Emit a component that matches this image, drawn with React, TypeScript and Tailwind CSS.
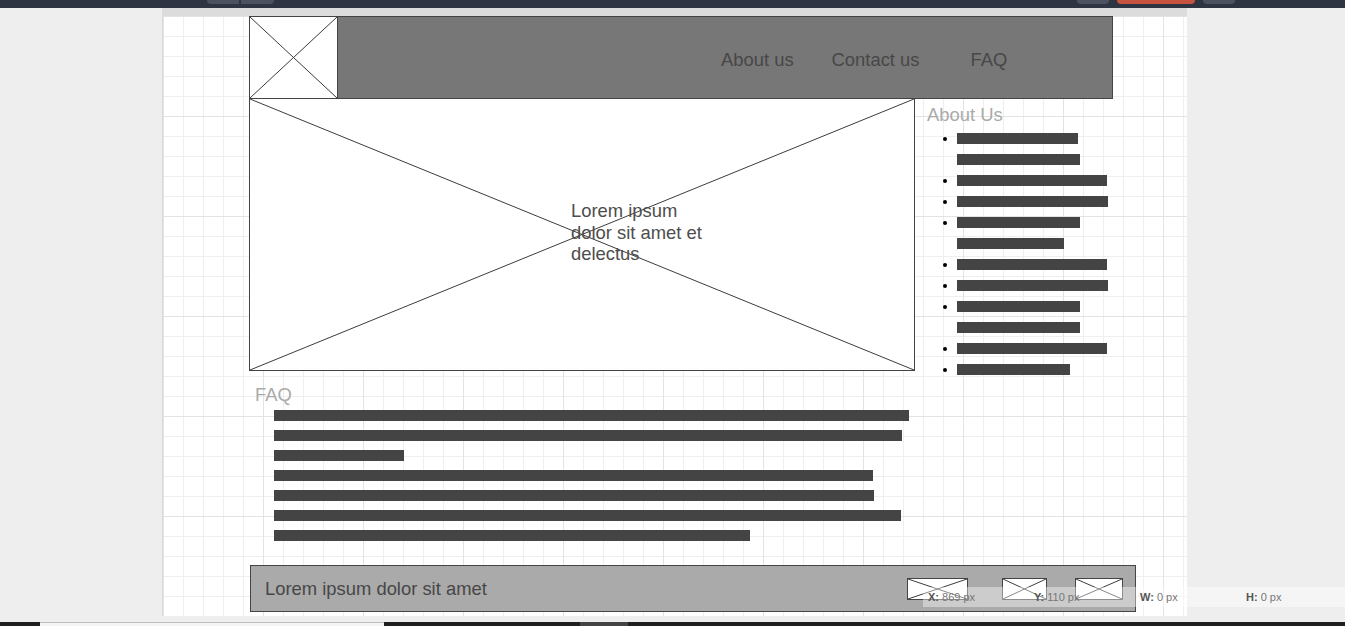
import React from 'react';

const aboutRows: number[][] = [[121, 123], [150], [151], [123, 107], [150], [151], [123, 123], [150], [113]];
const faqBars = [635, 628, 130, 599, 600, 627, 476];

function CrossLines() {
  return (
    <svg className="absolute inset-0 w-full h-full" preserveAspectRatio="none" viewBox="0 0 100 100">
      <line x1="0" y1="0" x2="100" y2="100" stroke="#3c3c3c" strokeWidth="1" vectorEffect="non-scaling-stroke" />
      <line x1="100" y1="0" x2="0" y2="100" stroke="#3c3c3c" strokeWidth="1" vectorEffect="non-scaling-stroke" />
    </svg>
  );
}

function Cross({ className = '' }: { className?: string }) {
  return (
    <div className={`relative bg-white ${className}`}>
      <CrossLines />
    </div>
  );
}

export default function App() {
  return (
    <div className="relative h-[626px] w-[1345px] overflow-hidden bg-[#eeeeee] font-['Liberation_Sans',Arial,sans-serif] flex flex-col">
      {/* Toolbar */}
      <div className="h-[8px] shrink-0 bg-[#2e3441] flex items-start">
        <div className="ml-[207px] flex gap-[2px]">
          <div className="w-[32px] h-[4px] bg-[#4b515e] rounded-bl-[4px]" />
          <div className="w-[33px] h-[4px] bg-[#4b515e] rounded-br-[4px]" />
        </div>
        <div className="ml-[803px] w-[32px] h-[4px] bg-[#4b515e] rounded-b-[4px]" />
        <div className="ml-[8px] w-[78px] h-[4px] bg-[#c5533f] rounded-b-[4px]" />
        <div className="ml-[8px] w-[32px] h-[4px] bg-[#4b515e] rounded-b-[4px]" />
      </div>

      {/* Canvas */}
      <div className="ml-[162px] w-[1025px] shrink-0 flex flex-col">
        <div className="h-[8px] bg-[#dcdcdc]" />
        <div className="h-[600px] border-l border-[#dadada] bg-white overflow-hidden [background-image:linear-gradient(to_right,#e3e3e3_1px,transparent_1px),linear-gradient(to_bottom,#e3e3e3_1px,transparent_1px),linear-gradient(to_right,#efefef_1px,transparent_1px),linear-gradient(to_bottom,#efefef_1px,transparent_1px)] [background-size:100px_100px,100px_100px,20px_20px,20px_20px]">
          {/* Header */}
          <div className="ml-[86px] w-[864px] h-[83px] border border-[#444] flex">
            <Cross className="w-[88px] h-full border-r border-[#444]" />
            <div className="flex-1 bg-[#777777] flex items-center pt-[4px] text-[18.4px] leading-[21px] text-[#474747]">
              <span className="ml-[383px]">About us</span>
              <span className="ml-[38px]">Contact us</span>
              <span className="ml-[51px]">FAQ</span>
            </div>
          </div>

          {/* Hero + sidebar */}
          <div className="-mt-px flex items-start">
            <div className="relative ml-[86px] w-[666px] h-[273px] border border-[#444] bg-white">
              <CrossLines />
              <p className="relative ml-[321px] mt-[101px] w-[142px] text-[18.4px] leading-[21.5px] text-[#4d4d4d]">
                Lorem ipsum dolor sit amet et delectus
              </p>
            </div>
            <div className="ml-[12px] pt-[6px]">
              <h2 className="text-[18.4px] leading-[21px] text-[#aaaaaa]">About Us</h2>
              <ul className="mt-[3px]">
                {aboutRows.map((rows, i) => (
                  <li key={i} className="flex items-start">
                    <div className="h-[21px] ml-[16px] w-[14px] flex items-center">
                      <span className="w-[4px] h-[4px] rounded-full bg-black" />
                    </div>
                    <div className="flex flex-col">
                      {rows.map((w, j) => (
                        <div key={j} className="h-[21px] flex items-center">
                          <div className="h-[11px] bg-[#444]" style={{ width: w }} />
                        </div>
                      ))}
                    </div>
                  </li>
                ))}
              </ul>
            </div>
          </div>

          {/* FAQ */}
          <h2 className="mt-[4px] ml-[92px] text-[18.4px] leading-[21px] text-[#aaaaaa]">FAQ</h2>
          <div className="mt-[5px] ml-[111px] flex flex-col gap-[9px]">
            {faqBars.map((w, i) => (
              <div key={i} className="h-[11px] bg-[#444]" style={{ width: w }} />
            ))}
          </div>

          {/* Footer */}
          <div className="mt-[24px] ml-[87px] w-[886px] h-[47px] border border-[#444] bg-[#aaaaaa] flex items-center">
            <span className="ml-[14px] text-[18.4px] leading-[21px] text-[#474747]">Lorem ipsum dolor sit amet</span>
            <Cross className="ml-auto w-[61px] h-[22px] border border-[#444]" />
            <Cross className="ml-[34px] w-[45px] h-[22px] border border-[#444]" />
            <Cross className="ml-[28px] mr-[12px] w-[48px] h-[22px] border border-[#444]" />
          </div>
        </div>
      </div>

      {/* Bottom bar */}
      <div className="mt-[6px] h-[4px] shrink-0 bg-[#1e1e1e] flex">
        <div className="ml-[40px] w-[344px] h-full bg-[#f4f4f4] border-t border-[#bdbdbd]" />
        <div className="ml-[196px] w-[48px] h-full bg-[#444]" />
      </div>

      {/* Coordinates overlay */}
      <div className="absolute left-[923px] right-0 top-[587px] h-[20px] bg-white/40 flex items-center pl-[5px] text-[11px] leading-[13px] whitespace-nowrap">
        <div className="w-[106px] shrink-0"><b className="text-[#555]">X:</b> <span className="text-[#777]">869 px</span></div>
        <div className="w-[106px] shrink-0"><b className="text-[#555]">Y:</b> <span className="text-[#777]">110 px</span></div>
        <div className="w-[106px] shrink-0"><b className="text-[#555]">W:</b> <span className="text-[#777]">0 px</span></div>
        <div className="w-[90px] shrink-0"><b className="text-[#555]">H:</b> <span className="text-[#777]">0 px</span></div>
      </div>
    </div>
  );
}
